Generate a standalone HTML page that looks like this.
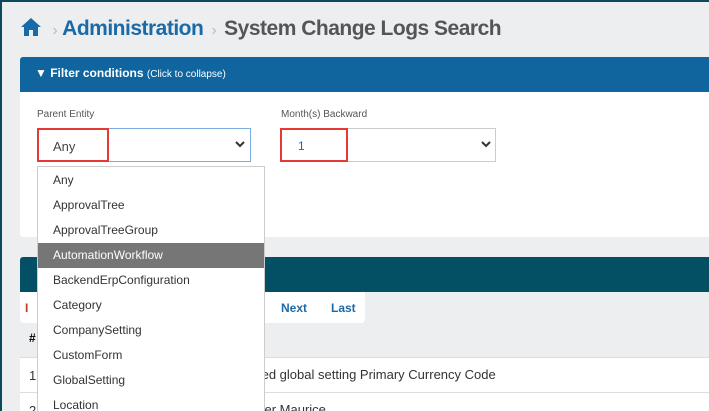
<!DOCTYPE html>
<html style="width:709px;height:411px;overflow:hidden"><head><style>
*{margin:0;padding:0;box-sizing:border-box}
body{width:709px;height:411px;overflow:hidden;background:#eceeef;font-family:"Liberation Sans",sans-serif;position:relative}
.a{position:absolute}
.crumb{left:20px;font-size:21px;font-weight:bold;white-space:nowrap;letter-spacing:-0.5px}
.list div{height:25px;line-height:25px;padding-left:15px;font-size:12px;color:#333}
</style></head><body>
<div class="a" style="left:0;top:0;width:709px;height:2px;background:#0d4a5c"></div>
<div class="a" style="left:0;top:0;width:2px;height:411px;background:#0d4a5c"></div>
<div class="a crumb" style="top:17px">
<svg width="22" height="20" viewBox="0 0 22 20" style="vertical-align:-2px"><path d="M11 1 L1 10 H4 V19 H9 V13 H13 V19 H18 V10 H21 Z" fill="#1b6aa8"/></svg>
<span style="color:#bbb;font-weight:normal;font-size:16px;margin:0 5px">›</span><span style="color:#1b6aa8">Administration</span><span style="color:#bbb;font-weight:normal;font-size:16px;margin:0 8px">›</span><span style="color:#555">System Change Logs Search</span></div>
<div class="a" style="left:20px;top:57px;width:700px;height:35px;background:#10659f;color:#fff;font-size:12px;line-height:33px;padding-left:15px;border-radius:3px 0 0 0"><b>▼ Filter conditions</b> <span style="font-size:10px">(Click to collapse)</span></div>
<div class="a" style="left:20px;top:92px;width:700px;height:145px;background:#fff;border-radius:0 0 3px 3px"></div>
<div class="a" style="left:37px;top:109px;font-size:10px;color:#555">Parent Entity</div>
<div class="a" style="left:281px;top:109px;font-size:10px;color:#555">Month(s) Backward</div>
<div class="a" style="left:37px;top:128px;width:214px;height:34px;border:1px solid #7aaee0;background:#fff"></div>
<div class="a" style="left:37px;top:128px;width:72px;height:34px;border:2px solid #e53935;font-size:13px;color:#444;padding:9px 0 0 14px">Any</div>
<svg class="a" style="left:235px;top:141px" width="10" height="7" viewBox="0 0 10 7"><path d="M1 1 L5 5 L9 1" stroke="#333" stroke-width="2" fill="none"/></svg>
<div class="a" style="left:280px;top:128px;width:216px;height:34px;border:1px solid #ccc;background:#fff"></div>
<div class="a" style="left:280px;top:128px;width:68px;height:34px;border:2px solid #e53935;font-size:12px;color:#1b6aa8;padding:9px 0 0 16px">1</div>
<svg class="a" style="left:481px;top:141px" width="10" height="7" viewBox="0 0 10 7"><path d="M1 1 L5 5 L9 1" stroke="#333" stroke-width="2" fill="none"/></svg>
<div class="a" style="left:20px;top:257px;width:700px;height:35px;background:#034f64;border-radius:3px 3px 0 0"></div>
<div class="a" style="left:20px;top:292px;width:345px;height:31px;background:#fff;border-radius:0 0 4px 4px"></div>
<div class="a" style="left:25px;top:301px;font-size:12px;font-weight:bold;color:#c0392b">I</div>
<div class="a" style="left:281px;top:301px;font-size:12px;font-weight:bold;color:#1b6aa8">Next</div>
<div class="a" style="left:331px;top:301px;font-size:12px;font-weight:bold;color:#1b6aa8">Last</div>
<div class="a" style="left:29px;top:331px;font-size:12px;font-weight:bold">#</div>
<div class="a" style="left:20px;top:357px;width:700px;height:35px;background:#fff;border-top:1px solid #ddd"></div>
<div class="a" style="left:20px;top:392px;width:700px;height:30px;background:#fff;border-top:1px solid #ddd"></div>
<div class="a" style="left:29px;top:368px;font-size:13px;color:#333">1</div>
<div class="a" style="left:29px;top:403px;font-size:13px;color:#333">2</div>
<div class="a" style="left:258px;top:367px;font-size:13px;color:#333">ted global setting Primary Currency Code</div>
<div class="a" style="left:258px;top:402px;font-size:13px;color:#333">ser Maurice</div>
<div class="a list" style="left:37px;top:166px;width:228px;height:250px;background:#fff;border:1px solid #ccc;padding-top:1px">
<div>Any</div><div>ApprovalTree</div><div>ApprovalTreeGroup</div>
<div style="background:#767676;color:#fff">AutomationWorkflow</div>
<div>BackendErpConfiguration</div><div>Category</div><div>CompanySetting</div><div>CustomForm</div><div>GlobalSetting</div><div>Location</div>
</div>
</body></html>
